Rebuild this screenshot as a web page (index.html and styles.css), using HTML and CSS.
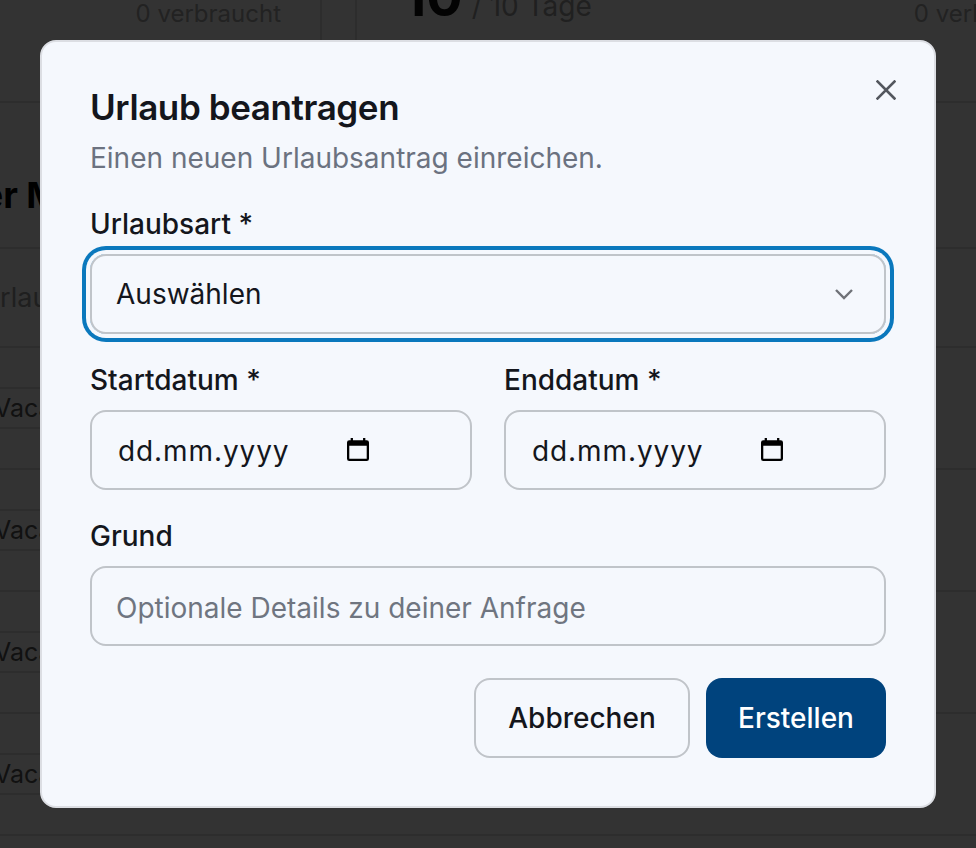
FILE: index.html
```html
<!DOCTYPE html>
<html lang="de">
<head>
<meta charset="utf-8">
<title>Urlaub beantragen</title>
<link rel="stylesheet" href="styles.css">
</head>
<body>
<div class="page">
  <section class="stats">
    <div class="card card-first"><span class="used">0 verbraucht</span></div>
    <div class="card card-second">
      <div class="quota"><span class="big">10</span><span class="of">/ 10 Tage</span></div>
      <span class="used">0 verbraucht</span>
    </div>
  </section>
  <div class="heading-row"><h2 class="heading">der Mitarbeiter</h2></div>
  <div class="table-head"><span>Urlaubsart</span></div>
  <div class="row"><div class="tag">Vacation</div></div>
  <div class="row"><div class="tag">Vacation</div></div>
  <div class="row"><div class="tag">Vacation</div></div>
  <div class="row"><div class="tag">Vacation</div></div>
  <div class="overlay">
    <form class="modal">
      <button type="button" class="close" aria-label="Schließen">
        <svg viewBox="0 0 20 20" width="20" height="20"><path d="M1.5 1.5 18.5 18.5M18.5 1.5 1.5 18.5"/></svg>
      </button>
      <h1 class="title">Urlaub beantragen</h1>
      <p class="subtitle">Einen neuen Urlaubsantrag einreichen.</p>
      <div class="field field-type">
        <div class="label">Urlaubsart *</div>
        <div class="control select">
          <span>Auswählen</span>
          <svg class="chevron" viewBox="0 0 20 12" width="20" height="12"><path d="M2 2 10 10 18 2"/></svg>
        </div>
      </div>
      <div class="dates">
        <div class="field">
          <div class="label">Startdatum *</div>
          <div class="control date">
            <span class="date-text">dd.mm.yyyy</span>
            <svg class="cal" viewBox="0 0 24 26" width="22" height="24"><path class="cal-fill" d="M4 1h2.500v2.500h11V1H20v2.500h1.500A2.500 2.500 0 0 1 24 6v17.500a2.500 2.500 0 0 1-2.500 2.500h-19A2.500 2.500 0 0 1 0 23.500V6a2.500 2.500 0 0 1 2.500-2.500H4zM2.500 9.500v14h19v-14z"/></svg>
          </div>
        </div>
        <div class="field">
          <div class="label">Enddatum *</div>
          <div class="control date">
            <span class="date-text">dd.mm.yyyy</span>
            <svg class="cal" viewBox="0 0 24 26" width="22" height="24"><path class="cal-fill" d="M4 1h2.500v2.500h11V1H20v2.500h1.500A2.500 2.500 0 0 1 24 6v17.500a2.500 2.500 0 0 1-2.500 2.500h-19A2.500 2.500 0 0 1 0 23.500V6a2.500 2.500 0 0 1 2.500-2.500H4zM2.500 9.500v14h19v-14z"/></svg>
          </div>
        </div>
      </div>
      <div class="field">
        <div class="label">Grund</div>
        <input class="control text" type="text" placeholder="Optionale Details zu deiner Anfrage">
      </div>
      <div class="actions">
        <button type="button" class="btn btn-cancel">Abbrechen</button>
        <button type="button" class="btn btn-primary">Erstellen</button>
      </div>
    </form>
  </div>
</div>
</body>
</html>
```
FILE: styles.css
```css
* { box-sizing: border-box; }
html, body { margin: 0; padding: 0; }
body { font-family: Inter, "Liberation Sans", sans-serif; background: #fff; }

.page {
  position: relative;
  width: 976px;
  height: 848px;
  overflow: hidden;
  background: #ffffff;
}

/* Page behind the dialog */
.stats {
  display: flex;
  gap: 33px;
  height: 103px;
  border-bottom: 2px solid #e2e2e2;
  overflow: hidden;
}
.card { height: 101px; flex: none; }
.card-first {
  width: 322px;
  border-right: 2px solid #e2e2e2;
  padding-right: 39px;
  text-align: right;
}
.card-second {
  width: 800px;
  border-left: 2px solid #e2e2e2;
  padding-left: 46px;
  display: flex;
  justify-content: flex-start;
}
.used { display: block; font-size: 24px; line-height: 28px; color: #a8a8a8; white-space: nowrap; }
.card-second .used { margin-left: 322px; }
.quota { display: flex; align-items: baseline; gap: 9px; margin-top: -36px; height: 65px; white-space: nowrap; flex: none; }
.big { font-size: 54px; line-height: 65px; font-weight: 700; color: #111; }
.of { font-size: 28px; line-height: 30px; color: #a0a0a0; }
.heading-row { height: 146px; border-bottom: 2px solid #e2e2e2; padding-top: 70px; }
.heading { margin: 0 0 0 -41px; font-size: 36px; line-height: 44px; font-weight: 700; color: #000; white-space: nowrap; }
.table-head {
  height: 99px;
  border-bottom: 2px solid #e2e2e2;
  display: flex;
  align-items: center;
  font-size: 27px;
  color: #9a9a9a;
}
.table-head span { margin-left: -20px; }
.row {
  height: 122px;
  border-bottom: 2px solid #e2e2e2;
  display: flex;
  align-items: center;
}
.tag {
  width: 200px;
  height: 42px;
  margin-left: -6px;
  border-top: 2px solid #e2e2e2;
  border-bottom: 2px solid #e2e2e2;
  font-size: 25px;
  line-height: 38px;
  color: #555;
}

/* Dialog */
.overlay {
  position: absolute;
  inset: 0;
  display: flex;
  align-items: center;
  justify-content: center;
  background: rgba(0, 0, 0, 0.8);
}
.modal {
  position: relative;
  width: 896px;
  height: 768px;
  padding: 48px;
  background: #f5f8fd;
  border: 2px solid #dcdee3;
  border-radius: 16px;
  display: flex;
  flex-direction: column;
  color: #14161c;
}
.close {
  position: absolute;
  top: 38px;
  right: 38px;
  padding: 0;
  width: 20px;
  height: 20px;
  border: 0;
  background: none;
  display: block;
}
.close svg { display: block; fill: none; stroke: #53575e; stroke-width: 2.600; stroke-linecap: square; }
.title { margin: -1px 0 1px; font-size: 35px; line-height: 36px; font-weight: 600; letter-spacing: -0.4px; }
.subtitle { margin: 16px 0 0; font-size: 28px; line-height: 32px; color: #6b7280; }
.field { display: flex; flex-direction: column; gap: 14px; min-width: 0; }
.field-type { margin-top: 34px; }
.label { font-size: 28px; line-height: 32px; font-weight: 500; }
.control {
  height: 80px;
  width: 100%;
  border: 2px solid #c0c4c9;
  border-radius: 16px;
  background: transparent;
  font-family: inherit;
  font-size: 28px;
  color: #14161c;
  display: flex;
  align-items: center;
}
.select {
  padding: 0 30px 0 24px;
  justify-content: space-between;
  box-shadow: 0 0 0 4px #f5f8fd, 0 0 0 8px #0a78bd;
}
.chevron { fill: none; stroke: #6f7278; stroke-width: 2.400; }
.dates {
  display: grid;
  grid-template-columns: 382px 382px;
  gap: 32px;
  margin-top: 30px;
}
.date { padding-left: 26px; }
.date-text { width: 229px; letter-spacing: 0.9px; flex: none; padding-top: 1px; }
.cal { flex: none; margin-top: -2px; }
.cal-fill { fill: #000; fill-rule: evenodd; }
.dates + .field { margin-top: 30px; }
.text { padding: 3px 24px 0; outline: none; }
.text::placeholder { color: #6f7580; opacity: 1; }
.actions { display: flex; justify-content: flex-end; gap: 16px; margin-top: 32px; }
.btn {
  height: 80px;
  border-radius: 16px;
  font-family: inherit;
  font-size: 28px;
  font-weight: 500;
  padding: 0;
}
.btn-cancel { width: 216px; background: transparent; border: 2px solid #c0c4c9; color: #14161c; }
.btn-primary { width: 180px; background: #00437d; border: 0; color: #fff; }
```
